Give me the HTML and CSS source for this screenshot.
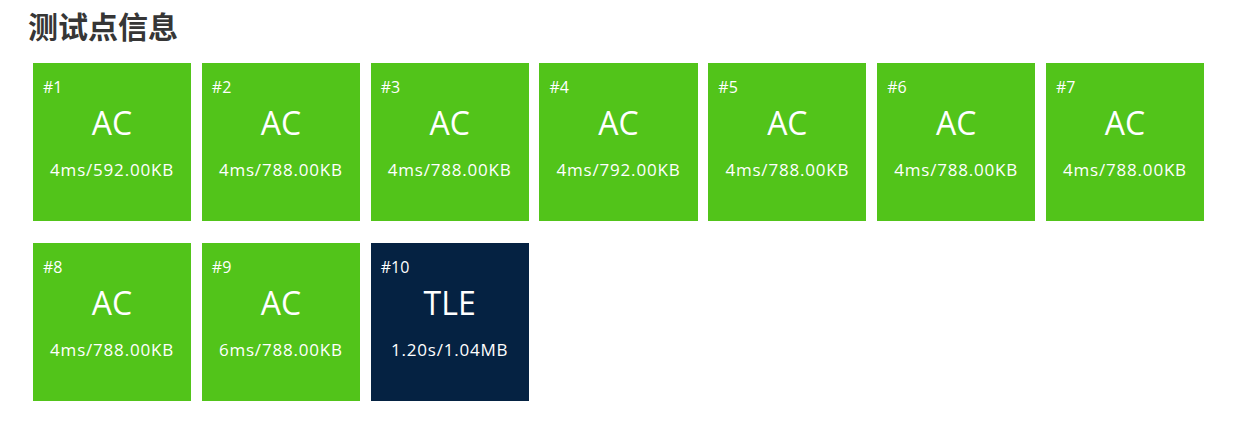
FILE: index.html
```html
<!DOCTYPE html>
<html lang="zh-CN">
<head>
  <meta charset="UTF-8">
  <title>测试点信息</title>
  <link rel="stylesheet" href="styles.css">
</head>
<body>
  <div class="page">
    <h2 class="title">测试点信息</h2>
    <div class="cases">
      <div class="case ac"><div class="num">#1</div><div class="status">AC</div><div class="usage">4ms/592.00KB</div></div>
      <div class="case ac"><div class="num">#2</div><div class="status">AC</div><div class="usage">4ms/788.00KB</div></div>
      <div class="case ac"><div class="num">#3</div><div class="status">AC</div><div class="usage">4ms/788.00KB</div></div>
      <div class="case ac"><div class="num">#4</div><div class="status">AC</div><div class="usage">4ms/792.00KB</div></div>
      <div class="case ac"><div class="num">#5</div><div class="status">AC</div><div class="usage">4ms/788.00KB</div></div>
      <div class="case ac"><div class="num">#6</div><div class="status">AC</div><div class="usage">4ms/788.00KB</div></div>
      <div class="case ac"><div class="num">#7</div><div class="status">AC</div><div class="usage">4ms/788.00KB</div></div>
      <div class="case ac"><div class="num">#8</div><div class="status">AC</div><div class="usage">4ms/788.00KB</div></div>
      <div class="case ac"><div class="num">#9</div><div class="status">AC</div><div class="usage">6ms/788.00KB</div></div>
      <div class="case tle"><div class="num">#10</div><div class="status">TLE</div><div class="usage">1.20s/1.04MB</div></div>
    </div>
  </div>
</body>
</html>
```

FILE: styles.css
```css
body {
  margin: 0;
  font-family: "Open Sans", "Noto Sans CJK SC", sans-serif;
  background: #fff;
}
.page {
  padding: 5px 0 0 28px;
}
.title {
  margin: 0 0 18px 0;
  font-family: "Noto Sans CJK SC", sans-serif;
  font-size: 30px;
  font-weight: bold;
  line-height: 40px;
  color: #363636;
}
.cases {
  margin-left: 5px;
  width: 1171px;
  display: grid;
  grid-template-columns: repeat(7, 1fr);
  column-gap: 10.8px;
  row-gap: 22px;
}
.case {
  height: 158px;
  box-sizing: border-box;
  padding: 14px 10px 0 10px;
  color: #fff;
  display: flex;
  flex-direction: column;
}
.ac {
  background-color: #52c41a;
}
.tle {
  background-color: #052242;
}
.num {
  font-size: 16px;
  line-height: 20px;
}
.status {
  text-align: center;
  font-size: 32px;
  line-height: 44px;
  margin-top: 4px;
}
.usage {
  text-align: center;
  font-size: 17px;
  letter-spacing: 0.8px;
  line-height: 24px;
  margin-top: 13px;
}
```
